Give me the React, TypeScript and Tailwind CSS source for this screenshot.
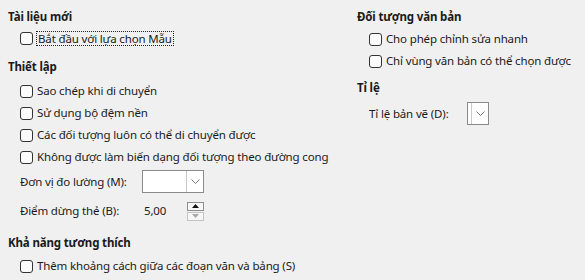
import { ReactNode } from 'react'

function Check({ label, focus }: { label: string; focus?: boolean }) {
  return (
    <div className="flex h-[22px] items-center pl-3">
      <span className="h-[13px] w-[13px] shrink-0 rounded-[3px] border border-[#333] bg-[#fbfbfb]" />
      <span
        className={
          focus
            ? 'ml-[3px] border border-dotted border-[#222] px-px leading-[13px]'
            : 'ml-[4px]'
        }
      >
        {label}
      </span>
    </div>
  )
}

function Header({ children }: { children: ReactNode }) {
  return <div className="h-4 font-bold leading-4">{children}</div>
}

function Chevron() {
  return (
    <svg width="9" height="5" viewBox="0 0 9 5" fill="none">
      <path d="M0.5 0.5 L4.5 4.5 L8.5 0.5" stroke="#777" strokeWidth="1" />
    </svg>
  )
}

function Combo({ width }: { width: string }) {
  return (
    <div className={`flex h-[23px] ${width} border border-[#8a8a8a] bg-white`}>
      <div className="flex-1" />
      <div className="flex w-[17px] items-center justify-center border-l border-[#c8c8c8]">
        <Chevron />
      </div>
    </div>
  )
}

function Spin() {
  return (
    <div className="flex h-[20px] w-[62px] items-center">
      <span className="flex-1 pl-[2px]">5,00</span>
      <div className="flex h-[19px] w-[17px] flex-col">
        <div className="flex h-[9px] items-center justify-center border border-[#8f8f8f] bg-[#f7f7f7]">
          <svg width="7" height="4" viewBox="0 0 7 4">
            <path d="M0 4 L3.5 0 L7 4 Z" fill="#111" />
          </svg>
        </div>
        <div className="mt-px flex h-[9px] items-center justify-center border border-[#c4c4c4] bg-[#f7f7f7]">
          <svg width="7" height="4" viewBox="0 0 7 4">
            <path d="M0 0 L3.5 4 L7 0 Z" fill="#a8a8a8" />
          </svg>
        </div>
      </div>
    </div>
  )
}

export default function App() {
  return (
    <div
      className="flex h-[280px] w-[585px] bg-[#f0f0f0] text-[11.5px] tracking-[-0.15px] text-[#1a1a1a]"
      style={{ fontFamily: '"Segoe UI", "Noto Sans", sans-serif' }}
    >
      <div className="w-[357px] shrink-0 pl-2 pt-[9px]">
        <Header>Tài liệu mới</Header>
        <div className="mt-[2px]">
          <Check label="Bắt đầu với lựa chọn Mẫu" focus />
        </div>

        <div className="mt-[10px]">
          <Header>Thiết lập</Header>
        </div>
        <div className="mt-[5px]">
          <Check label="Sao chép khi di chuyển" />
          <Check label="Sử dụng bộ đệm nền" />
          <Check label="Các đối tượng luôn có thể di chuyển được" />
          <Check label="Không được làm biến dạng đối tượng theo đường cong" />
        </div>
        <div className="mt-[2px] flex items-center pl-3">
          <span className="w-[122px]">Đơn vị đo lường (M):</span>
          <Combo width="w-[62px]" />
        </div>
        <div className="mt-[8px] flex items-center pl-3">
          <span className="w-[122px]">Điểm dừng thẻ (B):</span>
          <Spin />
        </div>

        <div className="mt-[14px]">
          <Header>Khả năng tương thích</Header>
        </div>
        <div className="mt-[4px]">
          <Check label="Thêm khoảng cách giữa các đoạn văn và bảng (S)" />
        </div>
      </div>

      <div className="flex-1 pt-[9px]">
        <Header>Đối tượng văn bản</Header>
        <div className="mt-[3px]">
          <Check label="Cho phép chỉnh sửa nhanh" />
          <Check label="Chỉ vùng văn bản có thể chọn được" />
        </div>
        <div className="mt-[8px]">
          <Header>Tỉ lệ</Header>
        </div>
        <div className="mt-[6px] flex items-center pl-3">
          <span className="w-[98px]">Tỉ lệ bản vẽ (D):</span>
          <Combo width="w-[22px]" />
        </div>
      </div>
    </div>
  )
}
